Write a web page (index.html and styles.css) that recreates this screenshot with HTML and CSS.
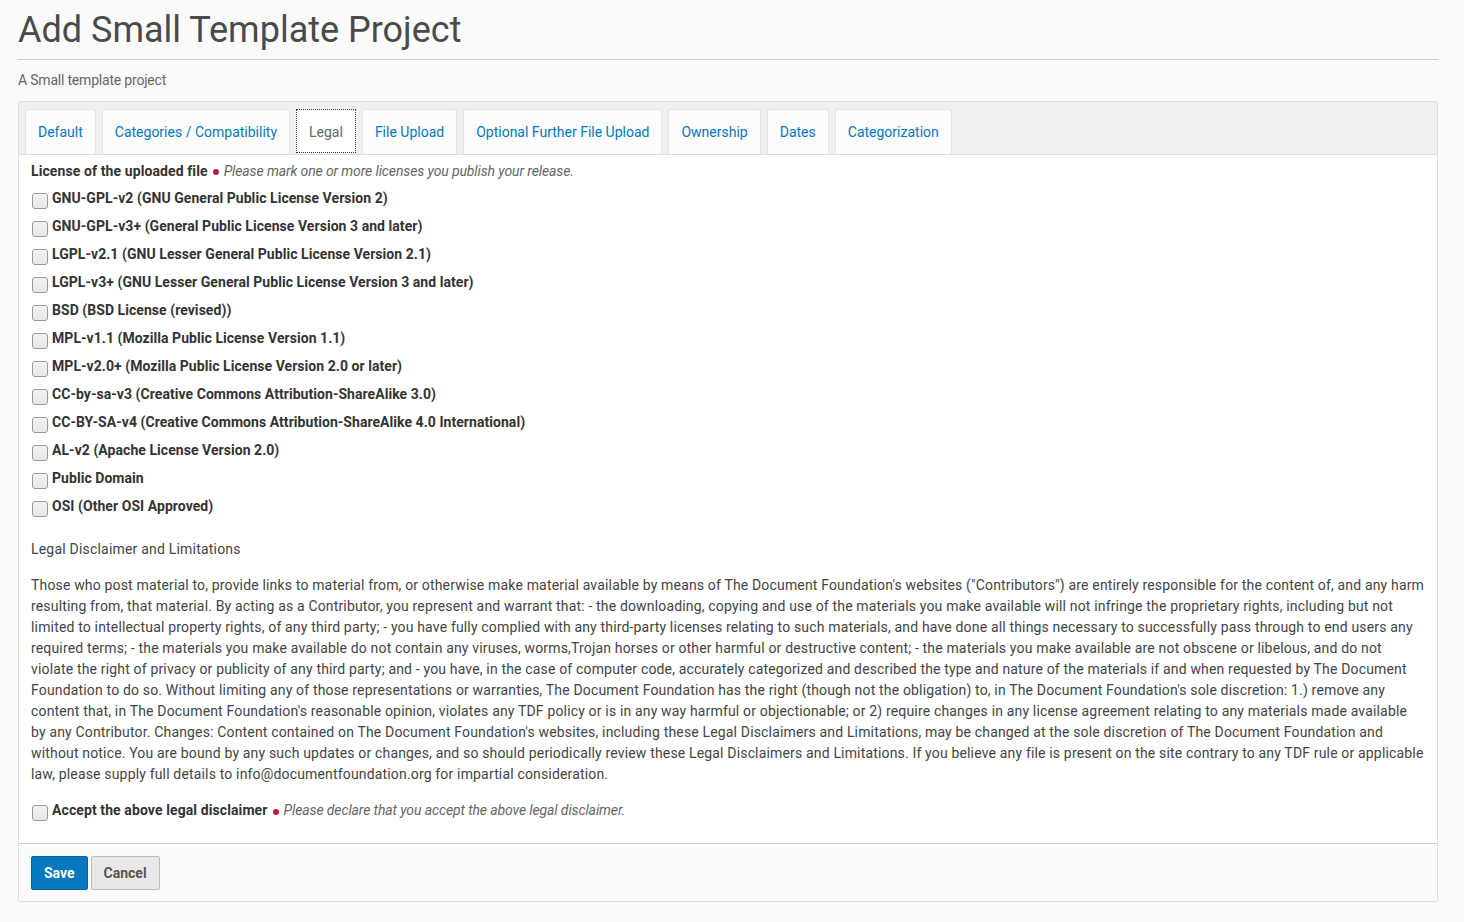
FILE: index.html
```html
<!DOCTYPE html>
<html>
<head>
<meta charset="utf-8">
<link rel="stylesheet" href="styles.css">
<title>Add Small Template Project</title>
</head>
<body>
<div class="page">
  <h1 class="title">Add Small Template Project</h1>
  <p class="subtitle">A Small template project</p>
  <form class="panel">
    <div class="tabs">
      <a class="tab">Default</a>
      <a class="tab">Categories / Compatibility</a>
      <a class="tab active">Legal</a>
      <a class="tab">File Upload</a>
      <a class="tab">Optional Further File Upload</a>
      <a class="tab">Ownership</a>
      <a class="tab">Dates</a>
      <a class="tab">Categorization</a>
    </div>
    <div class="body">
      <div class="field-label"><b>License of the uploaded file</b><span class="req"></span><i>Please mark one or more licenses you publish your release.</i></div>
      <ul class="checks">
        <li><span class="cb"></span><span>GNU-GPL-v2 (GNU General Public License Version 2)</span></li>
        <li><span class="cb"></span><span>GNU-GPL-v3+ (General Public License Version 3 and later)</span></li>
        <li><span class="cb"></span><span>LGPL-v2.1 (GNU Lesser General Public License Version 2.1)</span></li>
        <li><span class="cb"></span><span>LGPL-v3+ (GNU Lesser General Public License Version 3 and later)</span></li>
        <li><span class="cb"></span><span>BSD (BSD License (revised))</span></li>
        <li><span class="cb"></span><span>MPL-v1.1 (Mozilla Public License Version 1.1)</span></li>
        <li><span class="cb"></span><span>MPL-v2.0+ (Mozilla Public License Version 2.0 or later)</span></li>
        <li><span class="cb"></span><span>CC-by-sa-v3 (Creative Commons Attribution-ShareAlike 3.0)</span></li>
        <li><span class="cb"></span><span>CC-BY-SA-v4 (Creative Commons Attribution-ShareAlike 4.0 International)</span></li>
        <li><span class="cb"></span><span>AL-v2 (Apache License Version 2.0)</span></li>
        <li><span class="cb"></span><span>Public Domain</span></li>
        <li><span class="cb"></span><span>OSI (Other OSI Approved)</span></li>
      </ul>
      <h2 class="legal-title">Legal Disclaimer and Limitations</h2>
      <p class="legal-text">Those who post material to, provide links to material from, or otherwise make material available by means of The Document Foundation's websites ("Contributors") are entirely responsible for the content of, and any harm resulting from, that material. By acting as a Contributor, you represent and warrant that: - the downloading, copying and use of the materials you make available will not infringe the proprietary rights, including but not limited to intellectual property rights, of any third party; - you have fully complied with any third-party licenses relating to such materials, and have done all things necessary to successfully pass through to end users any required terms; - the materials you make available do not contain any viruses, worms,Trojan horses or other harmful or destructive content; - the materials you make available are not obscene or libelous, and do not violate the right of privacy or publicity of any third party; and - you have, in the case of computer code, accurately categorized and described the type and nature of the materials if and when requested by The Document Foundation to do so. Without limiting any of those representations or warranties, The Document Foundation has the right (though not the obligation) to, in The Document Foundation's sole discretion: 1.) remove any content that, in The Document Foundation's reasonable opinion, violates any TDF policy or is in any way harmful or objectionable; or 2) require changes in any license agreement relating to any materials made available by any Contributor. Changes: Content contained on The Document Foundation's websites, including these Legal Disclaimers and Limitations, may be changed at the sole discretion of The Document Foundation and without notice. You are bound by any such updates or changes, and so should periodically review these Legal Disclaimers and Limitations. If you believe any file is present on the site contrary to any TDF rule or applicable law, please supply full details to info@documentfoundation.org for impartial consideration.</p>
      <div class="accept"><span class="cb"></span><b>Accept the above legal disclaimer</b><span class="req"></span><i>Please declare that you accept the above legal disclaimer.</i></div>
    </div>
    <div class="footer">
      <button type="button" class="btn btn-primary">Save</button>
      <button type="button" class="btn">Cancel</button>
    </div>
  </form>
</div>
</body>
</html>
```
FILE: styles.css
```css
html, body {
  margin: 0;
  padding: 0;
  background: #fafafa;
}
body {
  font-family: Roboto, "Liberation Sans", sans-serif;
  color: #555;
  font-size: 14px;
}
.page {
  padding: 0 26px 0 18px;
}
.title {
  margin: 0;
  padding: 8px 0 7px;
  font-size: 36px;
  font-weight: 400;
  line-height: 44px;
  color: #4a4a4a;
  border-bottom: 1px solid #ccc;
}
.subtitle {
  margin: 11px 0 12px;
  line-height: 18px;
  color: #666;
  letter-spacing: -0.2px;
}
.panel {
  display: block;
  border: 1px solid #ddd;
  border-radius: 3px;
  background: #fff;
  box-shadow: 0 1px 1px rgba(0,0,0,0.05);
}
.tabs {
  display: flex;
  gap: 6px;
  padding: 7px 6px 0;
  background: #f0f0f0;
  border-bottom: 1px solid #ddd;
  border-radius: 3px 3px 0 0;
}
.tab {
  display: block;
  padding: 0 12px;
  height: 45px;
  line-height: 44px;
  box-sizing: border-box;
  background: #fcfcfc;
  border: 1px solid #e4e4e4;
  border-bottom: none;
  border-radius: 3px 3px 0 0;
  color: #0678be;
  font-size: 14px;
  white-space: nowrap;
}
.tab.active {
  background: #fff;
  color: #666;
  border: 1px dotted #333;
  border-radius: 0;
  height: 44px;
}
.body {
  padding: 7px 12px 22px;
  border-bottom: 1px solid #ccc;
}
.field-label {
  line-height: 18px;
  color: #333;
}
.field-label b, .accept b {
  font-weight: 700;
  color: #333;
  letter-spacing: 0.1px;
}
.req {
  display: inline-block;
  width: 6px;
  height: 6px;
  border-radius: 50%;
  background: #c1173a;
  margin: 0 5px 1px 5px;
}
i {
  color: #666;
  letter-spacing: -0.12px;
}
.checks {
  list-style: none;
  margin: 9px 0 0;
  padding: 0;
}
.checks li {
  display: flex;
  align-items: flex-start;
  height: 28px;
  line-height: 18px;
  font-weight: 700;
  color: #333;
  letter-spacing: 0.05px;
}
.cb {
  flex: none;
  display: inline-block;
  width: 16px;
  height: 16px;
  box-sizing: border-box;
  border: 1px solid #999;
  border-radius: 3px;
  background: linear-gradient(#f2f2f2, #e6e6e6);
  margin: 4px 4px 0 1px;
}
.legal-title {
  margin: 15px 0 0;
  font-size: 14px;
  font-weight: 400;
  line-height: 18px;
  color: #444;
  letter-spacing: 0.2px;
}
.legal-text {
  margin: 17px 0 0;
  line-height: 21px;
  color: #444;
  letter-spacing: 0.165px;
}
.accept {
  display: flex;
  align-items: flex-start;
  margin-top: 16px;
  line-height: 18px;
}
.accept .req {
  margin-top: 8px;
}
.footer {
  display: flex;
  gap: 3px;
  padding: 12px 12px 11px;
  background: #fafafa;
  border-radius: 0 0 3px 3px;
}
.btn {
  font-family: Roboto, "Liberation Sans", sans-serif;
  font-size: 14px;
  font-weight: 700;
  height: 34px;
  padding: 0 12px;
  border: 1px solid #bbb;
  border-radius: 2px;
  background: #e8e8e8;
  color: #555;
}
.btn-primary {
  background: #0678be;
  border-color: #05649f;
  color: #fff;
}
```
